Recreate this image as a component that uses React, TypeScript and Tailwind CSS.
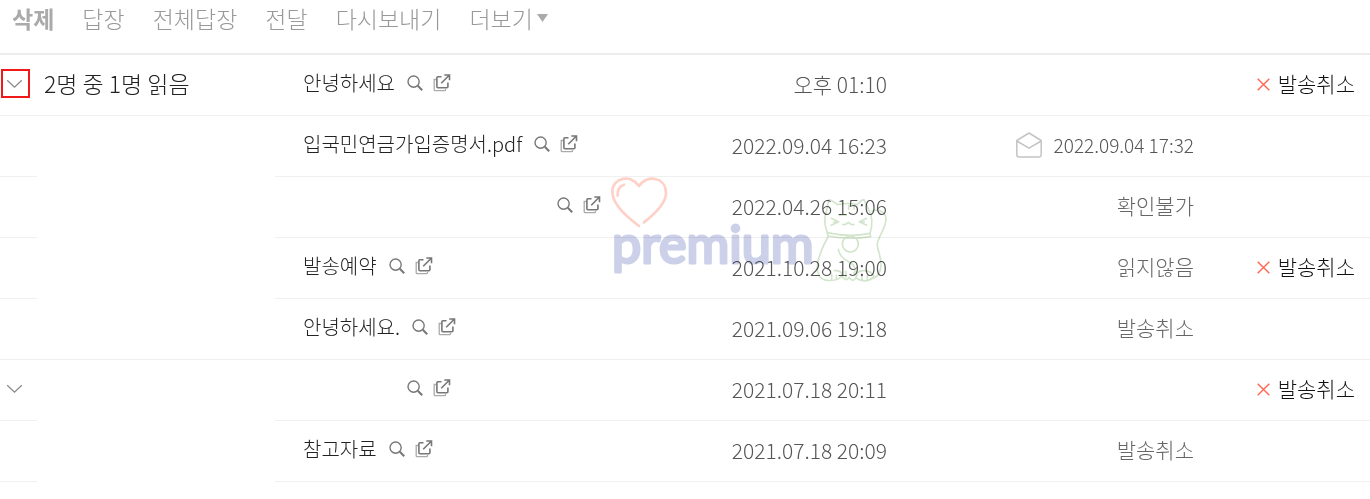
import clsx from "clsx";

interface Mail {
  id: number;
  expandable?: boolean;
  highlighted?: boolean;
  fullDivider?: boolean;
  recipient?: string;
  subject?: string;
  blankWidth?: string;
  sentAt: string;
  status?: string;
  readAt?: string;
  cancelable?: boolean;
}

const mails: Mail[] = [
  { id: 1, expandable: true, highlighted: true, fullDivider: true, recipient: "2명 중 1명 읽음", subject: "안녕하세요", sentAt: "오후 01:10", cancelable: true },
  { id: 2, subject: "입국민연금가입증명서.pdf", sentAt: "2022.09.04 16:23", readAt: "2022.09.04 17:32" },
  { id: 3, blankWidth: "w-[242px]", sentAt: "2022.04.26 15:06", status: "확인불가" },
  { id: 4, subject: "발송예약", sentAt: "2021.10.28 19:00", status: "읽지않음", cancelable: true },
  { id: 5, fullDivider: true, subject: "안녕하세요.", sentAt: "2021.09.06 19:18", status: "발송취소" },
  { id: 6, expandable: true, blankWidth: "w-[92px]", sentAt: "2021.07.18 20:11", cancelable: true },
  { id: 7, subject: "참고자료", sentAt: "2021.07.18 20:09", status: "발송취소" },
];

const actions = ["삭제", "답장", "전체답장", "전달", "다시보내기"];

function SearchIcon() {
  return (
    <svg width="16" height="16" viewBox="0 0 16 16" fill="none" stroke="#777" strokeWidth="1.4">
      <circle cx="6.6" cy="6.6" r="5.6" />
      <path d="M10.8 10.8l4.4 4.4" strokeWidth="2" />
    </svg>
  );
}

function PopupIcon() {
  return (
    <svg width="18" height="18" viewBox="0 0 18 18" fill="none">
      <path d="M3 5.5H1.2v10.2q0 1 1 1h9.3q1 0 1-1V15" stroke="#aaa" strokeWidth="1.3" />
      <path d="M8.5 2.7H4.9q-1 0-1 1v9.1q0 1 1 1h9q1 0 1-1V8.5" stroke="#777" strokeWidth="1.6" />
      <path d="M8.2 9.3l8-8M11.3 1h5.2v5.2" stroke="#777" strokeWidth="1.6" />
    </svg>
  );
}

function ChevronIcon() {
  return (
    <svg width="17" height="10" viewBox="0 0 17 10" fill="none" stroke="#888" strokeWidth="1.2">
      <path d="M1.2 1.2l7.3 7 7.3-7" />
    </svg>
  );
}

function EnvelopeIcon() {
  return (
    <svg width="26" height="26" viewBox="0 0 26 26" fill="none" stroke="#c4c4c4" strokeWidth="1.5" strokeLinejoin="round">
      <path d="M.8 8.5L13 1l12.2 7.5v14.2q0 2.3-2.3 2.3H3.1Q.8 25 .8 22.7z" />
      <path d="M.8 9L13 16.2 25.2 9" />
    </svg>
  );
}

function CrossIcon() {
  return (
    <svg width="13" height="13" viewBox="0 0 13 13" fill="none" stroke="#ff6650" strokeWidth="1.4">
      <path d="M.7.7l11.6 11.6M12.3.7L.7 12.3" />
    </svg>
  );
}

function Watermark() {
  return (
    <svg
      className="pointer-events-none absolute top-[175px] left-[610px] mix-blend-multiply"
      width="280"
      height="112"
      viewBox="60 30 840 336"
      fill="none"
      strokeLinecap="round"
      strokeLinejoin="round"
    >
      {/* heart */}
      <g stroke="#ffd0c8" strokeWidth="8">
        <path d="M147 183C112 157 67 119 67 81C67 37 123 26 147 63C171 26 228 37 228 84C228 117 193 148 162 172" />
        <path d="M83 92C82 76 89 63 102 59" />
      </g>
      <text
        x="66"
        y="293"
        fontSize="156"
        fill="#ccd0e9"
        stroke="#ccd0e9"
        strokeWidth="9"
        className="font-['Lato',sans-serif] font-normal"
      >
        premium
      </text>
      {/* lucky cat */}
      <g stroke="#d3e5cc" strokeWidth="5">
        <path d="M712 203C703 180 702 160 709 141L716 105Q720 102 742 119Q772 112 802 119Q817 102 822 104L836 134Q853 164 840 205Q776 218 712 203" />
        <path d="M712 203l2 10Q776 225 842 215l-2-10" />
        <circle cx="781" cy="237" r="24" />
        <path d="M724 160l22 10-22 11M731 171h15M830 160l-22 10 22 11M823 171h-15" />
        <path d="M758 178q7 4 17-6 10 10 17 6M748 151q12-3 20 0M776 120v13M792 121v10" />
        <path d="M846 139C860 131 886 137 888 161C887 194 863 214 862 240C862 263 880 280 871 315Q865 338 843 341" />
        <path d="M714 216C693 254 680 286 682 316Q687 344 710 346Q748 349 756 330Q754 315 733 317" />
        <path d="M745 253C751 281 769 284 789 299Q799 313 792 325M725 328v15M739 331v12M756 334Q768 352 778 337M778 337Q788 355 799 337M768 319v18" />
        <path d="M799 337Q799 318 820 317Q843 316 852 335Q829 358 799 340M816 331v14M832 331v13" />
      </g>
    </svg>
  );
}

function MailRow({ mail }: { mail: Mail }) {
  return (
    <tr className="h-[61px] [&>td]:border-b [&>td]:border-[#f0f0f0]">
      <td className="pb-1">
        {mail.expandable && (
          <button
            type="button"
            aria-label="수신자 펼치기"
            className={clsx(
              "ml-px flex size-[29px] items-center justify-center border-2 pt-0.5 pr-0.5",
              mail.highlighted ? "border-[#f01818]" : "border-transparent"
            )}
          >
            <ChevronIcon />
          </button>
        )}
      </td>
      <td className={clsx("pb-1 pl-[7px] text-[23px] text-[#222]", !mail.fullDivider && "border-b-transparent!")}>
        {mail.recipient}
      </td>
      <td className="pb-1 pl-7">
        <div className="flex items-center">
          {mail.subject ? (
            <a href="#" className="text-xl text-[#222]">{mail.subject}</a>
          ) : (
            <span className={mail.blankWidth} />
          )}
          <button type="button" aria-label="검색" className="ml-3">
            <SearchIcon />
          </button>
          <button type="button" aria-label="새 창으로 보기" className="ml-2.5">
            <PopupIcon />
          </button>
        </div>
      </td>
      <td className="text-right text-[21px] text-[#555]">{mail.sentAt}</td>
      <td className="pb-0.5 text-right text-[21px] text-[#666]">
        {mail.readAt ? (
          <span className="flex items-center justify-end gap-3 text-[19px] text-[#555]">
            <EnvelopeIcon />
            {mail.readAt}
          </span>
        ) : (
          mail.status
        )}
      </td>
      <td className="pr-[15px] pb-0.5">
        {mail.cancelable && (
          <button type="button" className="ml-auto flex items-center gap-2 text-[21px] text-[#111]">
            <CrossIcon />
            발송취소
          </button>
        )}
      </td>
    </tr>
  );
}

export default function App() {
  return (
    <div className="relative min-h-screen bg-white font-['Noto_Sans_CJK_KR',sans-serif] font-light whitespace-nowrap">
      <div className="flex h-[55px] items-start gap-7 border-b-2 border-[#ececec] pt-0.5 pl-3 text-[23px] leading-8 text-[#999]">
        {actions.map((label, i) => (
          <button key={label} type="button" className={i === 0 ? "font-bold text-[#aaa]" : undefined}>
            {label}
          </button>
        ))}
        <button type="button" className="flex items-center gap-1">
          더보기
          <svg width="11" height="8" viewBox="0 0 11 8" fill="#aaa">
            <path d="M0 0h11L5.5 8z" />
          </svg>
        </button>
      </div>

      <table className="w-full table-fixed border-separate border-spacing-0">
        <colgroup>
          <col className="w-[37px]" />
          <col className="w-[238px]" />
          <col />
          <col className="w-[200px]" />
          <col className="w-[307px]" />
          <col className="w-[176px]" />
        </colgroup>
        <tbody>
          {mails.map((mail) => (
            <MailRow key={mail.id} mail={mail} />
          ))}
        </tbody>
      </table>

      <Watermark />
    </div>
  );
}
